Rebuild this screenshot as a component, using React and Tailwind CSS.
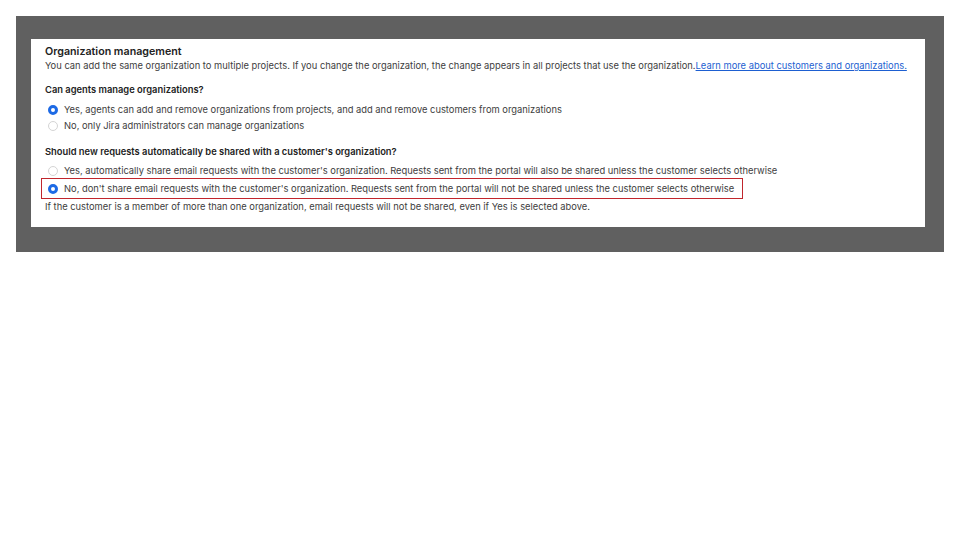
const font = { fontFamily: 'Inter, "Noto Sans", sans-serif' };

function Radio({ checked }) {
    return checked ? (
        <span className="box-border inline-block h-[10px] w-[10px] shrink-0 rounded-full border-[3px] border-[#1d6ae5] bg-white" />
    ) : (
        <span className="box-border inline-block h-[10px] w-[10px] shrink-0 rounded-full border border-[#d4d4d4] bg-white" />
    );
}

function Option({ checked, children }) {
    return (
        <div className="flex h-[14px] items-center gap-[6px] whitespace-nowrap pl-[3px]">
            <Radio checked={checked} />
            <span>{children}</span>
        </div>
    );
}

export default function App() {
    return (
        <div className="h-[540px] w-[960px] bg-white pl-4 pt-4" style={font}>
            <div className="w-[928px] bg-[#606060] pb-[25px] pl-[15px] pr-[19px] pt-[23px]">
                <div className="whitespace-nowrap bg-white pb-[13px] pl-[14px] pt-[6px] text-[9.35px] text-[#3d3d3d]">
                    <div className="h-[14px] text-[10.7px] font-semibold leading-[14px] text-[#222]">
                        Organization management
                    </div>
                    <div className="h-[14px] leading-[14px]">
                        You can add the same organization to multiple projects. If you change the organization, the change
                        appears in all projects that use the organization.
                        <a className="text-[#1d5fd1] underline">Learn more about customers and organizations.</a>
                    </div>

                    <div className="mt-[10px] h-[14px] font-semibold leading-[14px] text-[#222]">
                        Can agents manage organizations?
                    </div>
                    <div className="mt-[6px] flex flex-col gap-[2px]">
                        <Option checked>
                            Yes, agents can add and remove organizations from projects, and add and remove customers from
                            organizations
                        </Option>
                        <Option>No, only Jira administrators can manage organizations</Option>
                    </div>

                    <div className="mt-[12px] h-[14px] font-semibold leading-[14px] text-[#222]">
                        Should new requests automatically be shared with a customer's organization?
                    </div>
                    <div className="mt-[5px]">
                        <Option>
                            Yes, automatically share email requests with the customer's organization. Requests sent from the
                            portal will also be shared unless the customer selects otherwise
                        </Option>
                    </div>
                    <div className="-ml-[4px] flex h-[21px] w-[702px] items-center border border-[#c0262d] pl-[3px]">
                        <Option checked>
                            No, don't share email requests with the customer's organization. Requests sent from the portal
                            will not be shared unless the customer selects otherwise
                        </Option>
                    </div>
                    <div className="mt-px h-[14px] leading-[14px]">
                        If the customer is a member of more than one organization, email requests will not be shared, even
                        if Yes is selected above.
                    </div>
                </div>
            </div>
        </div>
    );
}
